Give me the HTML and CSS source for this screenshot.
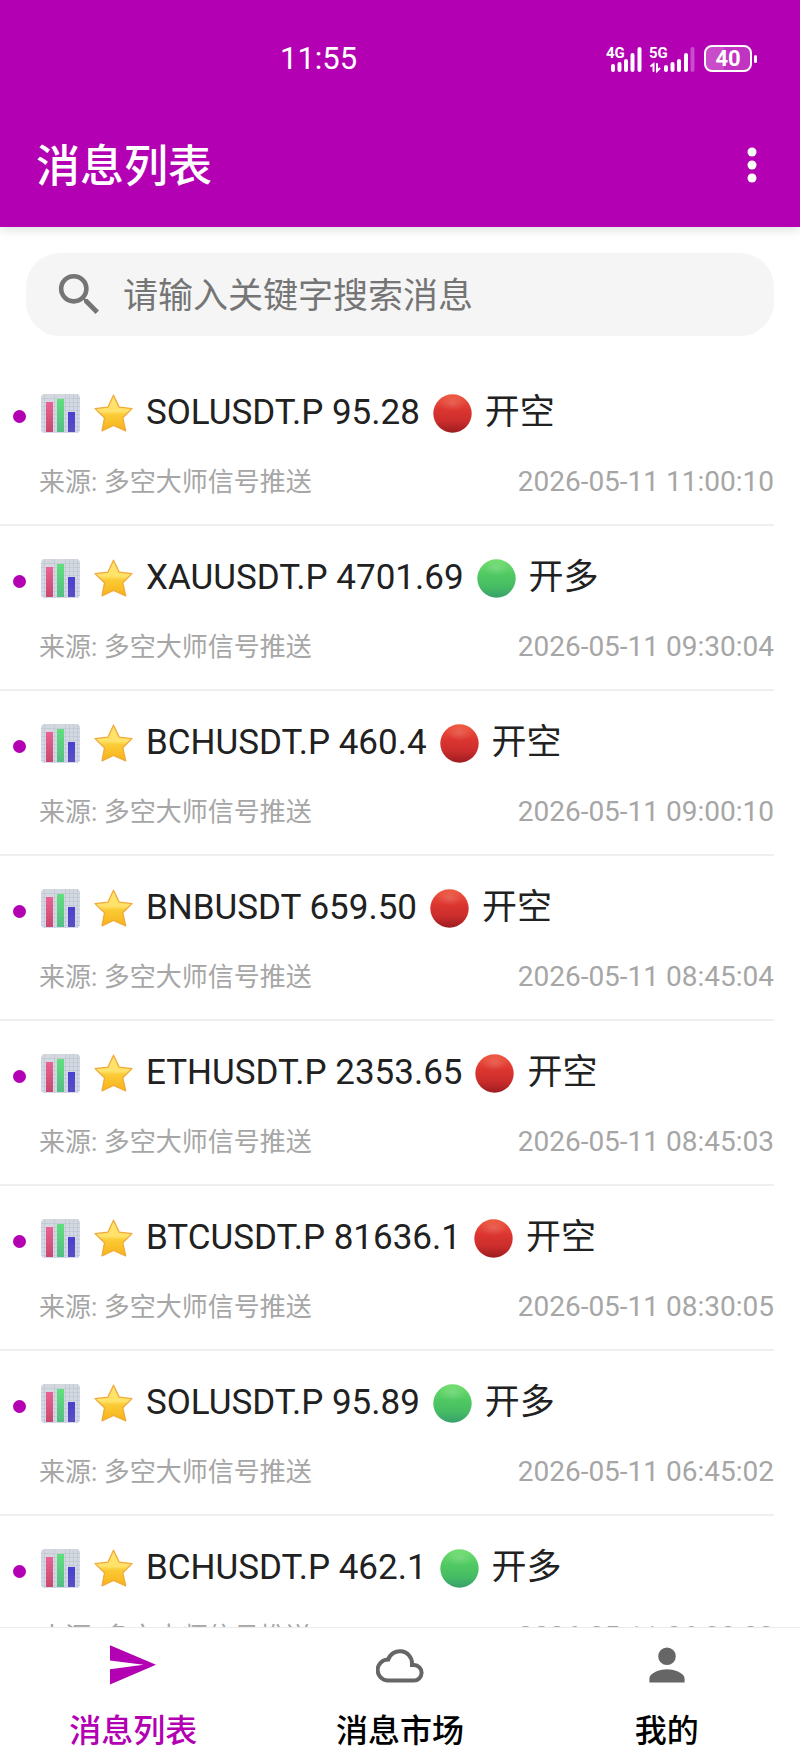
FILE: index.html
```html
<!DOCTYPE html>
<html lang="zh-CN">
<head>
    <meta charset="UTF-8">
    <meta name="viewport" content="width=device-width, initial-scale=1.0">
    <title>消息列表</title>
    <link rel="stylesheet" href="styles.css">
</head>
<body>
    <svg class="sprite" aria-hidden="true">
        <defs>
            <linearGradient id="paper" x1="0" y1="0" x2="0" y2="1">
                <stop offset="0" stop-color="#d3d8de"/>
                <stop offset="1" stop-color="#d6d9ee"/>
            </linearGradient>
            <linearGradient id="bar-red" x1="0" y1="0" x2="0" y2="1">
                <stop offset="0" stop-color="#ea6292"/>
                <stop offset="1" stop-color="#c9486c"/>
            </linearGradient>
            <linearGradient id="bar-green" x1="0" y1="0" x2="0" y2="1">
                <stop offset="0" stop-color="#5fe07c"/>
                <stop offset="1" stop-color="#55bd85"/>
            </linearGradient>
            <linearGradient id="bar-blue" x1="0" y1="0" x2="0" y2="1">
                <stop offset="0" stop-color="#4a3fd0"/>
                <stop offset="1" stop-color="#5a50c0"/>
            </linearGradient>
            <linearGradient id="gold" x1="0" y1="0" x2="0" y2="1">
                <stop offset="0" stop-color="#ffe36a"/>
                <stop offset="0.45" stop-color="#ffe26a"/>
                <stop offset="0.55" stop-color="#fbcb35"/>
                <stop offset="1" stop-color="#f7b21c"/>
            </linearGradient>
            <linearGradient id="red" x1="0" y1="0" x2="0" y2="1">
                <stop offset="0" stop-color="#ee5a40"/>
                <stop offset="0.4" stop-color="#dc3530"/>
                <stop offset="0.7" stop-color="#cb2d2c"/>
                <stop offset="1" stop-color="#9c1c20"/>
            </linearGradient>
            <linearGradient id="green" x1="0" y1="0" x2="0" y2="1">
                <stop offset="0" stop-color="#72de70"/>
                <stop offset="0.4" stop-color="#50c962"/>
                <stop offset="0.7" stop-color="#47bd63"/>
                <stop offset="1" stop-color="#37a06c"/>
            </linearGradient>
            <radialGradient id="shine">
                <stop offset="0" stop-color="#fff" stop-opacity="0.15"/>
                <stop offset="1" stop-color="#fff" stop-opacity="0"/>
            </radialGradient>
        </defs>
        <symbol id="icon-chart" viewBox="0 0 39 39">
            <rect width="39" height="39" rx="4" fill="url(#paper)"/>
            <path d="M0 4.5h39M0 8.5h39M0 12.5h39M0 16.5h39M0 20.5h39M0 24.5h39M0 28.5h39M0 32.5h39M0 36.5h39M3.5 0v39M13.5 0v39M24.5 0v39M28.5 0v39M32.5 0v39M36.5 0v39" stroke="#bcc4cf" stroke-width="0.6" fill="none"/>
            <path d="M5 8h7v30H5z" fill="url(#bar-red)"/>
            <path d="M16 5h7v33h-7z" fill="url(#bar-green)"/>
            <path d="M27 18h7v20h-7z" fill="url(#bar-blue)"/>
        </symbol>
        <symbol id="icon-star" viewBox="0 0 39 39">
            <path d="M19.5 1.2L25.2 13.1L38 14.6L28.8 23.8L31.7 36.8L19.5 31.5L8 36.8L10.5 23.8L1 14.6L14 13.1Z" fill="url(#gold)" stroke="#f0a93a" stroke-width="1.3" stroke-linejoin="round"/>
        </symbol>
        <symbol id="icon-red" viewBox="0 0 39 39">
            <circle cx="19.5" cy="19.5" r="19.2" fill="url(#red)"/>
            <ellipse cx="19.5" cy="9" rx="13" ry="8" fill="url(#shine)"/>
        </symbol>
        <symbol id="icon-green" viewBox="0 0 39 39">
            <circle cx="19.5" cy="19.5" r="19.2" fill="url(#green)"/>
            <ellipse cx="19.5" cy="9" rx="13" ry="8" fill="url(#shine)"/>
        </symbol>
    </svg>

    <header class="header">
        <div class="status-bar">
            <span class="time">11:55</span>
            <div class="status-icons">
                <svg class="signal" viewBox="0 0 92 28" aria-hidden="true">
                    <text x="0" y="13">4G</text>
                    <path d="M7 25v-4M13.5 25v-6M20 25v-9M26.5 25v-15M33.5 25v-21"/>
                    <text x="43" y="13">5G</text>
                    <path class="arrows" d="M45 21l2.5-2v7M51 19v7l2.5-2.5"/>
                    <path d="M60 25v-3M66.5 25v-6M73 25v-9M80 25v-15"/>
                    <path class="faded" d="M86.5 25v-21"/>
                </svg>
                <span class="battery">40</span>
            </div>
        </div>
        <div class="toolbar">
            <h1>消息列表</h1>
            <button class="menu-button" type="button" aria-label="更多">
                <svg viewBox="0 0 12 36">
                    <circle cx="6" cy="5" r="4.5"/>
                    <circle cx="6" cy="18" r="4.5"/>
                    <circle cx="6" cy="31" r="4.5"/>
                </svg>
            </button>
        </div>
    </header>

    <main class="content">
        <label class="search">
            <svg viewBox="0 0 24 24" aria-hidden="true">
                <path d="M15.5 14h-.79l-.28-.27A6.471 6.471 0 0 0 16 9.5 6.5 6.5 0 1 0 9.5 16c1.61 0 3.09-.59 4.23-1.57l.27.28v.79l5 4.99L20.49 19l-4.99-5zm-6 0C7.01 14 5 11.99 5 9.5S7.01 5 9.5 5 14 7.01 14 9.5 11.99 14 9.5 14z"/>
            </svg>
            <input type="text" placeholder="请输入关键字搜索消息" aria-label="搜索消息">
        </label>

        <ul class="message-list">
            <li class="message">
                <div class="message-title">
                    <i class="dot"></i>
                    <svg class="emoji"><use href="#icon-chart"/></svg>
                    <svg class="emoji"><use href="#icon-star"/></svg>
                    <span>SOLUSDT.P 95.28</span>
                    <svg class="emoji"><use href="#icon-red"/></svg>
                    <span>开空</span>
                </div>
                <div class="message-meta">
                    <span>来源: 多空大师信号推送</span>
                    <time>2026-05-11 11:00:10</time>
                </div>
            </li>
            <li class="message">
                <div class="message-title">
                    <i class="dot"></i>
                    <svg class="emoji"><use href="#icon-chart"/></svg>
                    <svg class="emoji"><use href="#icon-star"/></svg>
                    <span>XAUUSDT.P 4701.69</span>
                    <svg class="emoji"><use href="#icon-green"/></svg>
                    <span>开多</span>
                </div>
                <div class="message-meta">
                    <span>来源: 多空大师信号推送</span>
                    <time>2026-05-11 09:30:04</time>
                </div>
            </li>
            <li class="message">
                <div class="message-title">
                    <i class="dot"></i>
                    <svg class="emoji"><use href="#icon-chart"/></svg>
                    <svg class="emoji"><use href="#icon-star"/></svg>
                    <span>BCHUSDT.P 460.4</span>
                    <svg class="emoji"><use href="#icon-red"/></svg>
                    <span>开空</span>
                </div>
                <div class="message-meta">
                    <span>来源: 多空大师信号推送</span>
                    <time>2026-05-11 09:00:10</time>
                </div>
            </li>
            <li class="message">
                <div class="message-title">
                    <i class="dot"></i>
                    <svg class="emoji"><use href="#icon-chart"/></svg>
                    <svg class="emoji"><use href="#icon-star"/></svg>
                    <span>BNBUSDT 659.50</span>
                    <svg class="emoji"><use href="#icon-red"/></svg>
                    <span>开空</span>
                </div>
                <div class="message-meta">
                    <span>来源: 多空大师信号推送</span>
                    <time>2026-05-11 08:45:04</time>
                </div>
            </li>
            <li class="message">
                <div class="message-title">
                    <i class="dot"></i>
                    <svg class="emoji"><use href="#icon-chart"/></svg>
                    <svg class="emoji"><use href="#icon-star"/></svg>
                    <span>ETHUSDT.P 2353.65</span>
                    <svg class="emoji"><use href="#icon-red"/></svg>
                    <span>开空</span>
                </div>
                <div class="message-meta">
                    <span>来源: 多空大师信号推送</span>
                    <time>2026-05-11 08:45:03</time>
                </div>
            </li>
            <li class="message">
                <div class="message-title">
                    <i class="dot"></i>
                    <svg class="emoji"><use href="#icon-chart"/></svg>
                    <svg class="emoji"><use href="#icon-star"/></svg>
                    <span>BTCUSDT.P 81636.1</span>
                    <svg class="emoji"><use href="#icon-red"/></svg>
                    <span>开空</span>
                </div>
                <div class="message-meta">
                    <span>来源: 多空大师信号推送</span>
                    <time>2026-05-11 08:30:05</time>
                </div>
            </li>
            <li class="message">
                <div class="message-title">
                    <i class="dot"></i>
                    <svg class="emoji"><use href="#icon-chart"/></svg>
                    <svg class="emoji"><use href="#icon-star"/></svg>
                    <span>SOLUSDT.P 95.89</span>
                    <svg class="emoji"><use href="#icon-green"/></svg>
                    <span>开多</span>
                </div>
                <div class="message-meta">
                    <span>来源: 多空大师信号推送</span>
                    <time>2026-05-11 06:45:02</time>
                </div>
            </li>
            <li class="message">
                <div class="message-title">
                    <i class="dot"></i>
                    <svg class="emoji"><use href="#icon-chart"/></svg>
                    <svg class="emoji"><use href="#icon-star"/></svg>
                    <span>BCHUSDT.P 462.1</span>
                    <svg class="emoji"><use href="#icon-green"/></svg>
                    <span>开多</span>
                </div>
                <div class="message-meta">
                    <span>来源: 多空大师信号推送</span>
                    <time>2026-05-11 06:30:03</time>
                </div>
            </li>
        </ul>
    </main>

    <nav class="tab-bar">
        <a class="tab active" href="#messages">
            <svg viewBox="0 0 24 24" aria-hidden="true">
                <path d="M.5 21.7V14.1L17.3 11.9L.5 9.7V2.1L23.5 11.9Z"/>
            </svg>
            <span>消息列表</span>
        </a>
        <a class="tab" href="#market">
            <svg viewBox="0 0 24 24" aria-hidden="true">
                <path class="outline" d="M6 19.8H18.8a3.9 3.9 0 0 0 .2-7.8H18v-1a6.100 6.100 0 0 0-11.9-1.700A5.200 5.200 0 0 0 6 19.800Z"/>
            </svg>
            <span>消息市场</span>
        </a>
        <a class="tab" href="#mine">
            <svg viewBox="0 0 24 24" aria-hidden="true">
                <path d="M12 12a4.4 4.4 0 1 0 0-8.8 4.4 4.4 0 0 0 0 8.8zM3.2 20.7v-2c0-3 5.9-4.6 8.8-4.6s8.8 1.6 8.8 4.6v2z"/>
            </svg>
            <span>我的</span>
        </a>
    </nav>
</body>
</html>
```
FILE: styles.css
```css
* {
    box-sizing: border-box;
}

body {
    margin: 0;
    height: 100vh;
    display: flex;
    flex-direction: column;
    background: #fff;
    color: #212121;
    font-family: Roboto, "Noto Sans CJK SC", sans-serif;
}

.sprite {
    position: absolute;
    width: 0;
    height: 0;
}

/* 顶部 */
.header {
    position: relative;
    flex-shrink: 0;
    background: #b200b2;
    color: #fff;
    box-shadow: 0 2px 10px rgba(0, 0, 0, 0.15);
}

.status-bar {
    display: flex;
    justify-content: space-between;
    align-items: center;
    height: 103px;
    padding: 14px 43px 0 35%;
}

.time {
    font-size: 31px;
}

.status-icons {
    display: flex;
    align-items: center;
    gap: 6px;
}

.signal {
    width: 92px;
    height: 28px;
    fill: none;
    stroke: #fff;
    stroke-width: 4;
    stroke-linecap: round;
}

.signal text {
    fill: #fff;
    stroke: none;
    font-size: 15px;
    font-weight: 700;
}

.signal .arrows {
    stroke-width: 2;
}

.signal .faded {
    opacity: 0.3;
}

.battery {
    position: relative;
    width: 48px;
    height: 27px;
    margin-right: 5px;
    border: 2px solid #fff;
    border-radius: 8px;
    background: linear-gradient(90deg, rgba(255, 255, 255, 0.3) 40%, rgba(255, 255, 255, 0.2) 40%);
    font-size: 22px;
    font-weight: 700;
    line-height: 24px;
    text-align: center;
}

.battery::after {
    content: '';
    position: absolute;
    top: 8px;
    right: -7px;
    width: 3px;
    height: 8px;
    border-radius: 2px;
    background: #fff;
}

.toolbar {
    display: flex;
    justify-content: space-between;
    align-items: center;
    height: 124px;
    padding: 0 34px 0 36px;
}

.toolbar h1 {
    margin: 0;
    padding-bottom: 4px;
    font-size: 44px;
    font-weight: 500;
}

.menu-button {
    width: 28px;
    height: 48px;
    padding: 0;
    border: 0;
    background: none;
}

.menu-button svg {
    display: block;
    width: 12px;
    height: 36px;
    margin: 0 auto;
    fill: #fff;
}

/* 消息列表 */
.content {
    flex: 1;
    min-height: 0;
    overflow-y: auto;
    scrollbar-width: none;
}

.search {
    display: flex;
    align-items: center;
    gap: 16px;
    height: 83px;
    margin: 26px 26px 25px;
    padding: 0 26px;
    border-radius: 34px;
    background: #f5f5f5;
}

.search svg {
    flex-shrink: 0;
    width: 55px;
    height: 55px;
    fill: #757575;
}

.search input {
    flex: 1;
    min-width: 0;
    padding: 4px 0 0;
    border: 0;
    outline: 0;
    background: none;
    color: #212121;
    font-family: inherit;
    font-size: 35px;
}

.search input::placeholder {
    color: #757575;
}

.message-list {
    margin: 0;
    padding: 0;
    list-style: none;
}

.message {
    margin-right: 26px;
    padding: 28px 0 24px;
    border-bottom: 2px solid #efefef;
}

.message-title {
    display: flex;
    align-items: center;
    gap: 12px;
    height: 48px;
    padding-left: 13px;
    font-size: 35px;
    line-height: 48px;
    white-space: nowrap;
}

.dot {
    width: 13px;
    height: 13px;
    margin: 6px 2px 0 0;
    border-radius: 50%;
    background: #b200b2;
}

.emoji {
    flex-shrink: 0;
    width: 39px;
    height: 39px;
    margin: 0 1px;
}

.message-meta {
    display: flex;
    justify-content: space-between;
    margin-top: 27px;
    padding-left: 39px;
    color: #a6a6a6;
    font-size: 26px;
    line-height: 36px;
}

.message-meta time {
    font-size: 28px;
}

/* 底部导航 */
.tab-bar {
    display: flex;
    flex-shrink: 0;
    height: 133px;
    border-top: 1px solid #ebebeb;
    background: #fff;
}

.tab {
    flex: 1;
    display: flex;
    flex-direction: column;
    align-items: center;
    gap: 22px;
    padding-top: 13px;
    color: #000;
    font-size: 32px;
    font-weight: 500;
    line-height: 40px;
    text-decoration: none;
}

.tab svg {
    width: 48px;
    height: 48px;
    fill: #666;
}

.tab .outline {
    fill: none;
    stroke: #666;
    stroke-width: 2;
}

.tab.active {
    color: #b200b2;
}

.tab.active svg {
    fill: #b200b2;
}
```
